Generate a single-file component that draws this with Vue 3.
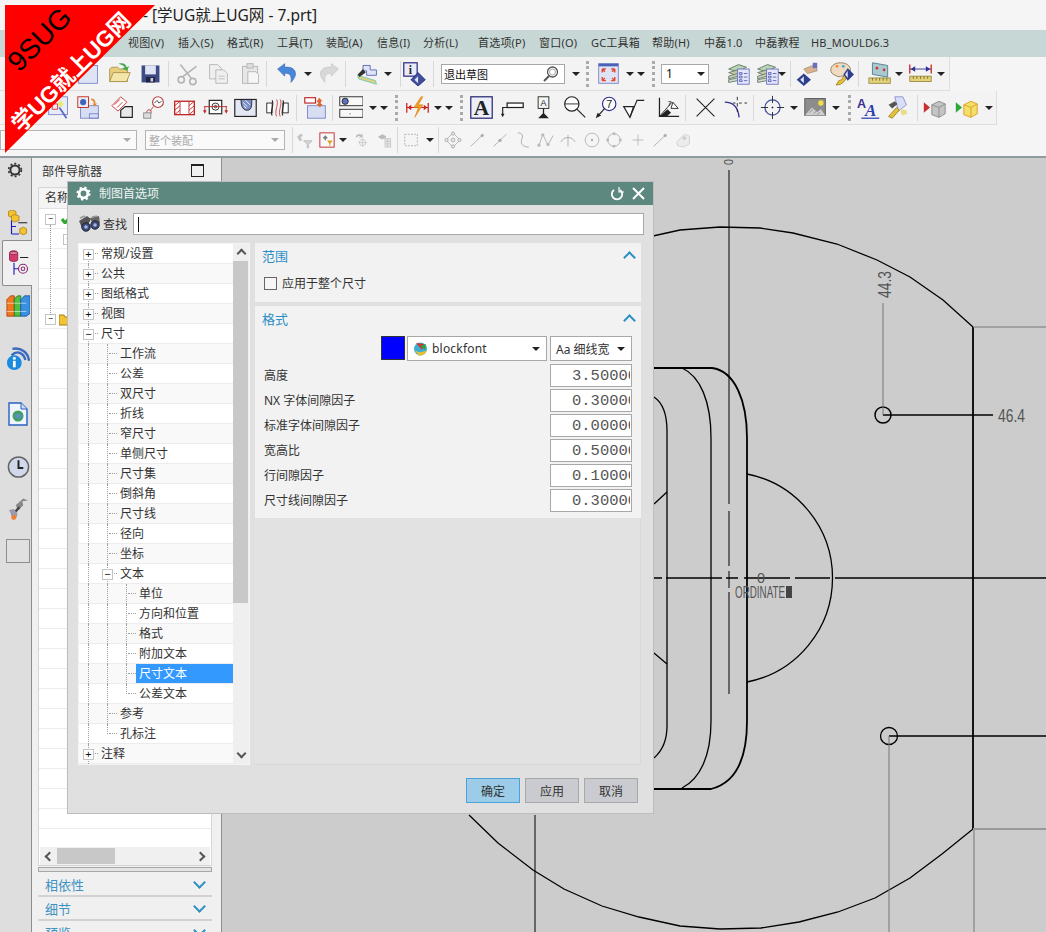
<script setup>
// petites icones de la barre d'outils, dessinees a la main (boite 28x28)
const icons = {
  newDoc: '<rect x="3" y="5" width="21" height="20" fill="#dfe4f5" stroke="#7a86c9"/>',
  open: '<path d="M3 23V9l2-2h7l2 2h9v14z" fill="#e8cf7e" stroke="#a8924e"/><path d="M3 23l4-10h19l-4 10z" fill="#f4e6a8" stroke="#a8924e"/><path d="M13 3c5-1 8 0 9 4l3-1-3 5-5-3 3-1c-1-2-4-3-7-4z" fill="#45a84c"/>',
  save: '<path d="M4 5h20v19H4z" fill="#3c4a86"/><rect x="8" y="5" width="12" height="10" fill="#dfe4f2"/><rect x="9" y="18" width="10" height="6" fill="#1d2440"/><rect x="14" y="19" width="3" height="4" fill="#ccd"/>',
  cut: '<g fill="none" stroke="#b4b4b4" stroke-width="1.8"><path d="M6 4l12 15M24 6L8 18"/><circle cx="7" cy="21" r="3.5"/><circle cx="20" cy="23" r="3.5"/></g>',
  copy: '<g fill="#efefef" stroke="#b4b4b4"><path d="M4 4h9l4 4v12H4z"/><path d="M11 10h9l4 4v11H11z"/></g><path d="M14 17h7M14 20h7" stroke="#bbb"/>',
  paste: '<rect x="5" y="6" width="17" height="19" fill="#e6e6e6" stroke="#b4b4b4"/><rect x="10" y="3" width="7" height="5" fill="#ddd" stroke="#b4b4b4"/><path d="M11 12h9l3 3v10H11z" fill="#f6f6f6" stroke="#b4b4b4"/>',
  undo: '<path d="M4 9l8-6v4c8-1 13 3 12 9-1 3-3 6-5 8 1-7-1-11-7-10v3z" fill="#4a86d8" stroke="#2d5ea8" stroke-width=".6"/>',
  redo: '<path d="M24 9l-8-6v4C8 6 3 10 4 16c1 3 3 6 5 8-1-7 1-11 7-10v3z" fill="#d8d8d8" stroke="#bcbcbc" stroke-width=".6"/>',
  sketch: '<path d="M9 5h8v5h7v6H13V11H9z" fill="#dfe5f7" stroke="#5a62b8"/><path d="M3 16l20 6 1 4-20-6z" fill="#e3d27a" stroke="#6bc5c0"/><path d="M3 15l6-6 3 4-7 5z" fill="#333"/>',
  info: '<rect x="2" y="2" width="15" height="15" fill="#e9ebf8" stroke="#2e2e86" stroke-width="1.4"/><text x="9.5" y="14" text-anchor="middle" font-size="13" font-weight="700" font-family="Liberation Serif" fill="#222">i</text><path d="M18 13l8 8-8 7-8-7z" fill="#3f4ea0" stroke="#1e2a70"/><path d="M18 17v8l-4-4z" fill="#dfe4f8"/>',
  fit: '<rect x="3" y="3" width="22" height="22" fill="#dfe3f6" stroke="#7d86c4"/><rect x="3" y="3" width="22" height="3" fill="#4a62b8"/><g stroke="#e04a2a" stroke-width="1.6" fill="none"><path d="M7 9h4M7 9v4M21 9h-4M21 9v4M7 22h4M7 22v-4M21 22h-4M21 22v-4M7 9l3 3M21 9l-3 3M7 22l3-3M21 22l-3-3"/></g>',
  stack: '<g fill="#b9d4b4" stroke="#5f7a62"><path d="M3 9l11-5 9 3-10 5z"/><path d="M3 13l10-3 4 2v3l-4 2z" fill="#c7c7a4"/><path d="M3 17l10-3v3l-10 3z" fill="#cfcfc0"/><path d="M3 21l10-2v3l-10 2z" fill="#d9d9d9"/></g><rect x="13" y="9" width="13" height="17" fill="#e4e7fa" stroke="#6a70c0"/><path d="M15 13h3v2h-3zM15 17h3v2h-3zM15 21h3v2h-3zM20 14h4M20 18h4M20 22h4" stroke="#5a60b8" fill="none"/>',
  hand: '<path d="M11 9l10-4 4 2 1 4-11 3z" fill="#d9b48e" stroke="#8d6d4d" stroke-width=".6"/><rect x="21" y="2" width="5" height="6" fill="#6670c0"/><path d="M11 14l8 7-8 7-8-7z" fill="#2f3f8e"/><path d="M11 17v8l-4-4z" fill="#dfe4f8"/>',
  palette: '<path d="M2 10c0-5 5-8 11-8s11 3 11 8-5 7-10 7c-1 1-4 1-7-1-3-1-5-3-5-6z" fill="#efdcc0" stroke="#8a7455"/><circle cx="9" cy="6" r="1.6" fill="#e84"/><circle cx="16" cy="6" r="1.6" fill="#4ac"/><path d="M8 27l3-5 3-1 3-5 3 2-3 5-4 3z" fill="#e6c23a" stroke="#a08420"/><path d="M21 8l7 7-7 7-5-7z" fill="#2f3f8e"/><path d="M21 11v8l-3-4z" fill="#dfe4f8"/>',
  plane: '<path d="M5 2l17 3v13L5 15z" fill="#a9c8cf" stroke="#4e7f8c"/><circle cx="10" cy="8" r="1.5" fill="#c33"/><circle cx="18" cy="10" r="1.5" fill="#c33"/><rect x="1" y="19" width="24" height="6" fill="#e3d27a" stroke="#9a8c44"/><path d="M5 19v3M9 19v3M13 19v3M17 19v3M21 19v3" stroke="#7a6c30"/>',
  dimRuler: '<rect x="2" y="17" width="24" height="6" fill="#e3d27a" stroke="#9a8c44"/><path d="M6 17v3M10 17v3M14 17v3M18 17v3M22 17v3" stroke="#7a6c30"/><path d="M2 9h24" stroke="#2f2f96"/><path d="M2 4v10M26 4v10" stroke="#c82020" stroke-width="1.4"/><path d="M3 9l5-3v6zM25 9l-5-3v6z" fill="#2f2f96"/>',
  magPage: '<rect x="3" y="2" width="21" height="20" fill="#e8ecf8" stroke="#7a86c9"/><path d="M7 10h6v6H7z" fill="none" stroke="#d33"/><path d="M15 14l8 12" stroke="#5a6ac4" stroke-width="2"/><path d="M16 6l4 4-4 4-3-4z" fill="#e8ec6a"/>',
  partPage: '<rect x="5" y="12" width="20" height="14" fill="#d7ddf3" stroke="#7a86c9"/><rect x="15" y="21" width="10" height="5" fill="none" stroke="#7a86c9"/><rect x="2" y="2" width="12" height="12" fill="#eee" stroke="#c82020"/><circle cx="8" cy="8" r="3.4" fill="#3f62b8"/><path d="M17 4c3 0 5 2 5 6l2-1-3 4-3-4 2 1c0-2-1-4-3-4z" fill="#e28a2e"/>',
  section: '<path d="M2 12L12 2l7 6-10 10z" fill="#fff" stroke="#c83030"/><path d="M5 11l6-6M8 14l6-6" stroke="#c83030"/><path d="M12 25V17l5-4h8v12z" fill="#e8e8e8" stroke="#222" stroke-width="1.3"/>',
  detail: '<circle cx="19" cy="8" r="6" fill="#fff" stroke="#b84040" stroke-width="1.3"/><path d="M15 9l3-3 2 3 3-2" stroke="#444" fill="none"/><path d="M14 13l-4 5" stroke="#b84040"/><circle cx="9" cy="19" r="2.5" fill="none" stroke="#b84040"/><rect x="3" y="20" width="8" height="6" fill="#ddd" stroke="#888"/>',
  hatchBar: '<rect x="3" y="7" width="22" height="15" fill="#fff" stroke="#c02828" stroke-width="1.5"/><path d="M9 7v15M19 7v15" stroke="#c02828"/><path d="M3 12l6-5M3 17l6-5M3 22l6-5M19 12l6-5M19 17l6-5M19 22l6-5" stroke="#c02828"/>',
  sectionView: '<rect x="7" y="6" width="14" height="15" fill="#fff" stroke="#222" stroke-width="1.3"/><circle cx="14" cy="13" r="4" fill="none" stroke="#222"/><circle cx="14" cy="13" r="1.4" fill="none" stroke="#222"/><path d="M1 13h26" stroke="#c02828"/><path d="M2 13v5M26 13v5" stroke="#c02828"/><path d="M0 17h4l-2 4zM24 17h4l-2 4z" fill="#c02828"/>',
  breakout: '<rect x="2" y="5" width="24" height="19" fill="#e4e8f4" stroke="#222" stroke-width="1.3"/><path d="M9 5c0 8 2 12 7 12s5-5 5-12z" fill="#7a8ec8" stroke="#222"/><path d="M11 8l5 5M14 6l5 5M12 12l3 3" stroke="#fff"/>',
  breakView: '<rect x="2" y="9" width="6" height="11" fill="#fff" stroke="#222"/><rect x="20" y="9" width="6" height="11" fill="#fff" stroke="#222"/><path d="M8 6c3 5-3 12 0 17M20 6c3 5-3 12 0 17" fill="none" stroke="#222" stroke-width="1.2"/><path d="M13 5c3 5-3 13 0 19M17 5c3 5-3 13 0 19" fill="none" stroke="#c04040"/>',
  viewMove: '<rect x="2" y="3" width="12" height="6" fill="#fff" stroke="#c02828" stroke-width="1.3"/><rect x="5" y="12" width="20" height="14" fill="#d7ddf3" stroke="#7a86c9"/><path d="M18 3l4 4h-2v3h2l-3 4-4-4h2V8h-2z" fill="#e0662e"/>',
  layerRow: '<rect x="2" y="2" width="26" height="10" fill="#f8f8f8" stroke="#222"/><rect x="2" y="16" width="26" height="9" fill="#f8f8f8" stroke="#222"/><circle cx="8" cy="7" r="3.5" fill="#6070c0" stroke="#222"/><path d="M13 21h1" stroke="#222"/>',
  bolt: '<path d="M2 14h24" stroke="#c82020" stroke-width="1.2"/><path d="M2 9v11M26 9v11" stroke="#c82020" stroke-width="1.4"/><path d="M3 14l4-3v6zM25 14l-4-3v6z" fill="#c82020"/><path d="M18 2l-8 12h5l-4 11 9-14h-5l5-9z" fill="#f0a020" stroke="#d87a10" stroke-width=".6"/>',
  letterA: '<rect x="2" y="2" width="24" height="24" fill="#eceef8" stroke="#2a2a72" stroke-width="1.4"/><text x="14" y="22" text-anchor="middle" font-size="24" font-weight="700" font-family="Liberation Serif" fill="#222">A</text>',
  weld: '<rect x="8" y="9" width="18" height="5" fill="#fff" stroke="#222" stroke-width="1.4"/><path d="M8 14H3v8" stroke="#222" fill="none" stroke-width="1.3"/><path d="M1 21h4l-2 4z" fill="#222"/>',
  datum: '<rect x="8" y="2" width="12" height="13" fill="#f4f4f4" stroke="#222"/><text x="14" y="12" text-anchor="middle" font-size="10" font-family="Liberation Sans" fill="#222">A</text><path d="M14 15v6" stroke="#222" stroke-width="1.4"/><path d="M8 26l6-6 6 6z" fill="#222"/>',
  mag: '<circle cx="11" cy="10" r="8" fill="#fff" stroke="#222" stroke-width="1.3"/><path d="M3 10h16" stroke="#222"/><path d="M17 16l9 9" stroke="#222" stroke-width="1.3"/>',
  balloon: '<circle cx="17" cy="10" r="7.5" fill="#fff" stroke="#2f2f96" stroke-width="1.3"/><text x="17" y="14" text-anchor="middle" font-size="12" font-family="Liberation Sans" fill="#222">7</text><path d="M12 15L4 24" stroke="#222" stroke-width="1.3"/><path d="M2 26l2-6 4 3z" fill="#222"/>',
  sqrt: '<path d="M3 13h11L10 25z" fill="#fff" stroke="#222" stroke-width="1.3"/><path d="M10 25L18 6h8" fill="none" stroke="#222" stroke-width="1.3"/>',
  angle: '<path d="M5 3v21h22" fill="none" stroke="#222" stroke-width="1.4"/><path d="M5 24l9-8 4 4-5 4z" fill="#222"/><path d="M5 24l14-16" stroke="#222"/><path d="M20 8l6 7h-8z" fill="#fff" stroke="#222"/><text x="14" y="12" font-size="8" font-family="Liberation Sans" fill="#222">7</text>',
  cross: '<path d="M4 4l20 20M24 4L4 24" stroke="#222" stroke-width="1.2"/>',
  filletCross: '<path d="M2 8c10 0 15 6 16 17" fill="none" stroke="#2f2f96" stroke-width="1.4"/><path d="M16 2v4M16 9v4M16 16v3M11 9h3M18 9h3M24 9h3" stroke="#222"/>',
  target: '<circle cx="14" cy="14" r="8.5" fill="none" stroke="#3f4ea0" stroke-width="1.4"/><path d="M14 1v8M14 19v8M1 14h8M19 14h8M13 14h2M14 13v2" stroke="#222"/>',
  image: '<rect x="2" y="4" width="23" height="19" fill="#8c8c8c" stroke="#555"/><circle cx="20" cy="9" r="3" fill="#f0e040"/><path d="M2 23l8-9 6 5 4-3 5 7z" fill="#cfcfcf"/><path d="M7 20l4-4M12 21l4-4M16 22l3-3" stroke="#8c8c8c"/>',
  textStyle: '<text x="1" y="14" font-size="14" font-weight="700" font-family="Liberation Sans" fill="#3a2f96">A</text><text x="10" y="24" font-size="19" font-weight="700" font-style="italic" font-family="Liberation Serif" fill="#2f3fb0">A</text><path d="M6 26h20" stroke="#2f3fb0" stroke-width="1.4"/>',
  wrenchDoc: '<path d="M11 2h9l4 9-9 7z" fill="#d9ddf5" stroke="#8a90d0"/><path d="M4 24l9-10 3 3-8 9z" fill="#e6c23a" stroke="#9a8420"/><path d="M4 11l7-4 3 3-6 5z" fill="#555"/><path d="M17 16l7 1 1 4-6 2z" fill="#eadc88"/>',
  cubeRed: '<path d="M2 8l7 6-7 6z" fill="#c83030"/><path d="M11 11l8-4 7 3v11l-7 4-8-3z" fill="#c4c4c4" stroke="#8a8a8a"/><path d="M11 11l8 3 7-4M19 14v11" stroke="#8a8a8a" fill="none"/>',
  cubeYellow: '<path d="M2 8l7 6-7 6z" fill="#2da83a"/><path d="M11 11l8-4 7 3v11l-7 4-8-3z" fill="#f2e06a" stroke="#e09a20"/><path d="M11 11l8 3 7-4M19 14v11" stroke="#e09a20" fill="none"/>',
  filterA: '<path d="M3 9l6-4 2 3-3 2 2 5-4 0z" fill="#c4c4c4"/><path d="M12 15h12l-5 5v5h-2v-5z" fill="#d4d4d4" stroke="#b4b4b4"/>',
  filterB: '<rect x="1.5" y="1.5" width="25" height="25" fill="#fafafa" stroke="#c02828" stroke-width="1.6"/><path d="M11 6v9M7 10h8" stroke="#444"/><circle cx="11" cy="10" r="2.5" fill="none" stroke="#444"/><path d="M14 15h10l-4 5v4h-2v-4z" fill="#e0a020"/>',
  filterC: '<path d="M4 9c2-5 7-5 9-3l2-2v6h-6l2-2c-2-1-4 0-5 2z" fill="#bdbdbd"/><circle cx="15" cy="18" r="5" fill="none" stroke="#bdbdbd"/><path d="M15 11v14M8 18h14" stroke="#bdbdbd"/>',
  filterD: '<path d="M3 9l7-4 6 3-2 4-6 1z" fill="#bbb"/><rect x="14" y="12" width="9" height="13" fill="#e4e4e4" stroke="#c0c0c0"/><path d="M14 16h9M14 20h9M18 12v13" stroke="#c0c0c0"/>',
  dashBox: '<rect x="3" y="4" width="22" height="20" fill="none" stroke="#999" stroke-width="1.3" stroke-dasharray="3 2.5"/>',
  snapPts: '<g fill="#e4e4e4" stroke="#aaa" stroke-width="1.3"><path d="M14 3l11 11-11 11L3 14z" fill="none"/><circle cx="14" cy="4" r="2.5"/><circle cx="14" cy="24" r="2.5"/><circle cx="4" cy="14" r="2.5"/><circle cx="24" cy="14" r="2.5"/><circle cx="14" cy="14" r="3"/></g>',
  line1: '<path d="M4 24L24 5" stroke="#aaa" stroke-width="1.3"/><circle cx="22" cy="7" r="2.4" fill="#aaa"/>',
  line2: '<path d="M4 24L24 5" stroke="#aaa" stroke-width="1.3"/><circle cx="14" cy="14.5" r="2.6" fill="#aaa"/>',
  squiggle: '<path d="M6 3c8 0 8 5 6 10s0 12 11 12" fill="none" stroke="#aaa" stroke-width="1.5"/>',
  spline: '<path d="M3 23L9 5l8 17 8-15" fill="none" stroke="#aaa" stroke-width="1.3"/><circle cx="9" cy="6" r="2.6" fill="#bbb"/><circle cx="17" cy="21" r="2.6" fill="#bbb"/><circle cx="3" cy="22" r="2.6" fill="#bbb"/>',
  arc3: '<path d="M3 17c4-9 18-9 22 0" fill="none" stroke="#aaa" stroke-width="1.4"/><path d="M14 6v18" stroke="#aaa" stroke-width="1.3"/>',
  circleDot: '<circle cx="14" cy="14" r="12" fill="none" stroke="#aaa" stroke-width="1.4"/><circle cx="14" cy="14" r="2" fill="#aaa"/>',
  circlePts: '<circle cx="14" cy="14" r="11" fill="none" stroke="#aaa" stroke-width="1.4"/><circle cx="14" cy="3" r="2.6" fill="#bbb"/><circle cx="14" cy="25" r="2.6" fill="#bbb"/><circle cx="3" cy="14" r="2.6" fill="#bbb"/><circle cx="25" cy="14" r="2.6" fill="#bbb"/>',
  plus: '<path d="M14 3v22M3 14h22" stroke="#aaa" stroke-width="1.4"/>',
  solidPt: '<path d="M4 18l12-13 8 3v12l-9 5-9-2z" fill="#ececec" stroke="#c4c4c4"/><circle cx="16" cy="11" r="3" fill="#ccc"/>',
}

// une ligne d'outils : [centre x, type, largeur]
const sizes = { arrow: 8, sep: 1, grip: 3 }
const place = (items, size) => {
  let right = 0
  return items.map(([x, type, w]) => {
    const width = w || sizes[type] || size
    const item = { type, width, ml: x - width / 2 - right }
    right = x + width / 2
    return item
  })
}

const row1 = place([
  [88, 'newDoc'], [119, 'open'], [150, 'save'], [168, 'sep'], [187, 'cut'], [218, 'copy'], [250, 'paste'],
  [266, 'sep'], [286, 'undo'], [308, 'arrow'], [329, 'redo'], [345, 'sep'], [367, 'sketch'], [388, 'arrow'],
  [400, 'sep'], [414, 'info'], [433, 'sep'], [503, 'search', 124], [576, 'arrow'], [587, 'grip'], [608, 'fit'],
  [630, 'arrow'], [641, 'arrow'], [653, 'grip'], [685, 'spin', 48], [738, 'stack'], [767, 'stack'], [782, 'arrow'],
  [790, 'sep'], [806, 'hand'], [841, 'palette'], [858, 'sep'], [880, 'plane'], [899, 'arrow'], [920, 'dimRuler'], [941, 'arrow'],
], 25)
const row2 = place([
  [58, 'magPage'], [88, 'partPage'], [122, 'section'], [153, 'detail'], [184, 'hatchBar'], [215, 'sectionView'],
  [245, 'breakout'], [277, 'breakView'], [296, 'sep'], [315, 'viewMove'], [332, 'sep'], [350, 'layerRow'],
  [373, 'arrow'], [384, 'arrow'], [396, 'grip'], [417, 'bolt'], [438, 'arrow'], [449, 'arrow'], [461, 'grip'],
  [481, 'letterA'], [512, 'weld'], [543, 'datum'], [574, 'mag'], [606, 'balloon'], [633, 'sqrt'], [667, 'angle'],
  [685, 'sep'], [705, 'cross'], [735, 'filletCross'], [753, 'sep'], [772, 'target'], [794, 'arrow'], [815, 'image'],
  [836, 'arrow'], [849, 'grip'], [868, 'textStyle'], [897, 'wrenchDoc'], [917, 'sep'], [934, 'cubeRed'], [966, 'cubeYellow'], [989, 'arrow'],
], 25)
const row3 = place([
  [68, 'combo', 137], [215, 'combo2', 140], [292, 'sep'], [305, 'filterA', 20], [327, 'filterB', 16], [343, 'arrow'],
  [362, 'filterC', 18], [385, 'filterD', 18], [397, 'sep'], [411, 'dashBox', 16], [430, 'arrow'], [438, 'sep'],
  [453, 'snapPts'], [477, 'line1'], [500, 'line2'], [523, 'squiggle'], [546, 'spline'], [568, 'arc3'],
  [592, 'circleDot', 16], [614, 'circlePts', 16], [638, 'plus', 14], [660, 'line1'], [683, 'solidPt'],
], 18)
const toolRows = [
  { cls: 'row-a', items: row1 },
  { cls: 'row-b', items: row2 },
  { cls: 'row-c', items: row3 },
]

const menuPos = [
  ['视图(V)', 128], ['插入(S)', 178], ['格式(R)', 227], ['工具(T)', 277], ['装配(A)', 326], ['信息(I)', 377],
  ['分析(L)', 423], ['首选项(P)', 478], ['窗口(O)', 539], ['GC工具箱', 591], ['帮助(H)', 652], ['中磊1.0', 704],
  ['中磊教程', 755], ['HB_MOULD6.3', 811], ['', 900],
]
const menus = menuPos.slice(0, -1).map((m, i) => ({ t: m[0], width: menuPos[i + 1][1] - m[1] }))

// arbre du dialogue : niveau, repli, fin de branche
const tree = [
  { t: '常规/设置', l: 0, e: '+' }, { t: '公共', l: 0, e: '+' }, { t: '图纸格式', l: 0, e: '+' }, { t: '视图', l: 0, e: '+' },
  { t: '尺寸', l: 0, e: '-' },
  { t: '工作流', l: 1 }, { t: '公差', l: 1 }, { t: '双尺寸', l: 1 }, { t: '折线', l: 1 }, { t: '窄尺寸', l: 1 },
  { t: '单侧尺寸', l: 1 }, { t: '尺寸集', l: 1 }, { t: '倒斜角', l: 1 }, { t: '尺寸线', l: 1 }, { t: '径向', l: 1 }, { t: '坐标', l: 1 },
  { t: '文本', l: 1, e: '-' },
  { t: '单位', l: 2 }, { t: '方向和位置', l: 2 }, { t: '格式', l: 2 }, { t: '附加文本', l: 2 },
  { t: '尺寸文本', l: 2, sel: true }, { t: '公差文本', l: 2, last: true },
  { t: '参考', l: 1, up: true }, { t: '孔标注', l: 1, last: true, up: true },
  { t: '注释', l: 0, e: '+' },
]

const fields = [
  ['高度', '3.50000'],
  ['NX 字体间隙因子', '0.30000'],
  ['标准字体间隙因子', '0.00000'],
  ['宽高比', '0.50000'],
  ['行间隙因子', '0.10000'],
  ['尺寸线间隙因子', '0.30000'],
]

const navRows = Array.from({ length: 32 }, (_, i) => i)
</script>

<template>
  <div class="app">
    <div class="titlebar">- [学UG就上UG网 - 7.prt]</div>
    <div class="menubar">
      <span class="menu-first">文件(F)</span>
      <span v-for="m in menus" :key="m.t" class="menu-item" :style="{ width: m.width + 'px' }">{{ m.t }}</span>
    </div>

    <div class="toolbars">
      <div v-for="r in toolRows" :key="r.cls" class="toolrow" :class="r.cls">
        <template v-for="(it, i) in r.items" :key="i">
          <span v-if="it.type === 'arrow'" class="tarrow" :style="{ marginLeft: it.ml + 'px' }"></span>
          <span v-else-if="it.type === 'sep'" class="tsep" :style="{ marginLeft: it.ml + 'px' }"></span>
          <span v-else-if="it.type === 'grip'" class="tgrip" :style="{ marginLeft: it.ml + 'px' }"></span>
          <div v-else-if="it.type === 'search'" class="tsearch" :style="{ marginLeft: it.ml + 'px', width: it.width + 'px' }">
            <span class="tsearch-text">退出草图</span>
            <svg width="18" height="18" viewBox="0 0 18 18"><circle cx="10.5" cy="7" r="5" fill="#fff" stroke="#555" stroke-width="1.3"/><circle cx="10.5" cy="7" r="3" fill="none" stroke="#aaa"/><path d="M7 11l-5 5" stroke="#555" stroke-width="2"/></svg>
          </div>
          <div v-else-if="it.type === 'spin'" class="tspin" :style="{ marginLeft: it.ml + 'px', width: it.width + 'px' }">
            <span>1</span><i class="tarrow"></i>
          </div>
          <div v-else-if="it.type === 'combo'" class="tcombo" :style="{ marginLeft: it.ml + 'px', width: it.width + 'px' }">
            <span></span><i class="tarrow grey"></i>
          </div>
          <div v-else-if="it.type === 'combo2'" class="tcombo" :style="{ marginLeft: it.ml + 'px', width: it.width + 'px' }">
            <span>整个装配</span><i class="tarrow grey"></i>
          </div>
          <svg v-else class="ticon" viewBox="0 0 28 28" :style="{ marginLeft: it.ml + 'px', width: it.width + 'px', height: it.width + 'px' }" v-html="icons[it.type]"></svg>
        </template>
      </div>
    </div>
    <div class="toolbars-line"></div>

    <div class="main">
      <aside class="rail">
        <svg class="rail-gear" width="16" height="16" viewBox="0 0 16 16"><circle cx="8" cy="8" r="4.6" fill="none" stroke="#333" stroke-width="2"/><circle cx="8" cy="8" r="6.4" fill="none" stroke="#333" stroke-width="1.6" stroke-dasharray="2 2.1"/></svg>
        <div class="rail-tab first">
          <svg width="21" height="27" viewBox="0 0 26 36"><path d="M5 0l6 2v6l-6 2-4-2V2z" fill="#f4c430" stroke="#a87c10"/><path d="M9 6l6 2v6l-6 2-4-2V8z" fill="#f4c430" stroke="#a87c10"/><path d="M5 14v18M5 22h6M5 32h10" stroke="#1a1ac0" stroke-width="1.5" fill="none"/><path d="M14 17h12" stroke="#222" stroke-width="1.4"/><path d="M16 25l5-2 4 2v6l-4 2-5-2z" fill="#f4c430" stroke="#a87c10"/></svg>
        </div>
        <div class="rail-tab active">
          <svg width="21" height="27" viewBox="0 0 26 36"><path d="M1 4c0-4 11-4 11 0v9c0 3-11 3-11 0z" fill="#d43a6a" stroke="#7a1a40"/><ellipse cx="6.5" cy="4" rx="5.5" ry="2" fill="#e88aa8" stroke="#7a1a40"/><path d="M15 10h11" stroke="#222" stroke-width="1.4"/><path d="M7 17v16M7 25h6" stroke="#1a1ac0" stroke-width="1.5"/><circle cx="19" cy="25" r="6" fill="none" stroke="#8a2a70" stroke-width="1.5"/><circle cx="19" cy="25" r="2.4" fill="none" stroke="#8a2a70" stroke-width="1.4"/></svg>
        </div>
        <svg class="ri ri-books" width="24" height="24" viewBox="0 0 26 24"><path d="M1 5l4-4h4v22H1z" fill="#f07820" stroke="#b04a10"/><path d="M9 4l4-3h3v22H9z" fill="#50c040" stroke="#2a7a20"/><path d="M16 5l4-4h6v19l-4 3h-6z" fill="#3a90e0" stroke="#1a60a0"/><path d="M1 9h8M1 18h8M9 9h7M9 18h7M16 9h6M16 18h6" stroke="#fff" stroke-opacity=".6"/></svg>
        <svg class="ri ri-rss" width="24" height="26" viewBox="0 0 26 26"><path d="M6 9c6-6 13-3 15 5" fill="none" stroke="#3a6ac0" stroke-width="2.6"/><path d="M7 2c9-2 17 4 18 13" fill="none" stroke="#3a6ac0" stroke-width="2.6"/><circle cx="9" cy="17" r="8" fill="#1a8ae0"/><rect x="7.5" y="15" width="3" height="7" fill="#fff"/><rect x="7.5" y="11" width="3" height="2.6" fill="#fff"/></svg>
        <svg class="ri ri-doc" width="20" height="24" viewBox="0 0 20 24"><path d="M1 1h12l6 6v16H1z" fill="#f0f4ff" stroke="#2a60c0" stroke-width="1.4"/><path d="M13 1v6h6" fill="#cfdcf8" stroke="#2a60c0"/><circle cx="10" cy="14" r="5.5" fill="#40a060"/><path d="M6 14c2-3 6-3 8 0-1 3-5 4-8 0z" fill="#5a90c0"/></svg>
        <svg class="ri ri-clock" width="23" height="24" viewBox="0 0 24 24"><circle cx="12" cy="12" r="10.5" fill="#d0d8ea" stroke="#666" stroke-width="1.6"/><path d="M12 5v8h5" fill="none" stroke="#222" stroke-width="2"/></svg>
        <svg class="ri ri-tools" width="21" height="24" viewBox="0 0 22 24"><path d="M8 8L16 1l5 2-6 1 1 4-5 5z" fill="#888"/><path d="M12 10l-8 9" stroke="#444" stroke-width="2.6"/><path d="M1 13l5-1 4 5-1 4-5-2z" fill="#9a9ab0"/><circle cx="6" cy="21" r="2.6" fill="#f08030"/></svg>
        <div class="rail-empty"></div>
      </aside>

      <section class="nav">
        <div class="nav-head">
          <span>部件导航器</span>
          <i class="nav-win"></i>
        </div>
        <div class="nav-list">
          <div class="nav-col">名称</div>
          <div class="nav-body">
            <div v-for="n in navRows" :key="n" class="nav-row"></div>
            <i class="nav-exp e1">−</i>
            <i class="nav-exp e2">−</i>
            <i class="nav-exp e3">−</i>
            <i class="nav-vline"></i>
            <svg class="nav-check" width="12" height="10" viewBox="0 0 12 10"><path d="M1 5l3 4 7-8" fill="none" stroke="#2aa82a" stroke-width="3"/></svg>
            <svg class="nav-folder" width="14" height="12" viewBox="0 0 14 12"><path d="M0 11V1h5l1 2h7v8z" fill="#f4c430" stroke="#a87c10"/></svg>
          </div>
          <div class="nav-scroll">
            <b class="chev left"></b>
            <i class="nav-thumb"></i>
            <b class="chev right"></b>
          </div>
        </div>
        <div class="nav-split"></div>
        <div class="acc"><span>相依性</span><b class="acc-down"></b></div>
        <div class="acc"><span>细节</span><b class="acc-down"></b></div>
        <div class="acc"><span>预览</span><b class="acc-down"></b></div>
      </section>

      <div class="canvas">
        <svg width="824" height="775" viewBox="222 157 824 775" class="drawing">
          <g fill="none" stroke="#000" stroke-width="1.3">
            <path d="M520 226L653 235 680 229 720 226 760 227 793 232 837 243 877 259 910 276 943 299 973 326" />
            <path d="M973 828L942 853 910 877 875 897 838 911 799 921 761 927 720 928 680 925 639 916 602 905 564 888 533 869 498 842 469 814" />
            <path d="M973 326V828" stroke-width="1.8" />
            <path d="M653 367H712C735 370 747 400 747 437V720C747 760 735 782 711 788H640" stroke-width="1.8" />
            <path d="M653 367H682C700 375 711 400 711 437V720C711 755 700 778 682 787" stroke-width="1.3" />
            <path d="M654 396C663 402 667 412 667 430V725C667 740 662 750 654 757" />
            <path d="M667 491L654 503M654 652L667 663" />
            <path d="M747 473A106 106 0 0 1 747 681" />
            <path d="M883 414H993" />
            <circle cx="883" cy="414" r="8" stroke-width="1.5" />
            <circle cx="889" cy="735" r="8.5" stroke-width="1.3" />
            <path d="M889 735H1046" />
            <path d="M835 577H1046" />
            <path d="M653 577H662M666 577H722M726 577H738M744 577H790M795 577H830" />
            <path d="M729 169V503M729 510V565M729 570V587M729 591V693" stroke-width="1" />
            <path d="M535 814V932" stroke-width="1" />
          </g>
          <g fill="none" stroke="#777" stroke-width="1">
            <path d="M883 302V414" />
            <path d="M973 326H1046" />
            <path d="M889 735V932" />
            <path d="M974 828V932" />
          </g>
          <path d="M973 828H1046" stroke="#999" stroke-width="2" />
          <g class="cad-text">
            <text x="757" y="582" font-size="15" textLength="8" lengthAdjust="spacingAndGlyphs">0</text>
            <text x="735" y="597" font-size="16" textLength="50" lengthAdjust="spacingAndGlyphs">ORDINATE</text>
            <rect x="786" y="585" width="6" height="12" fill="#444" />
            <text x="998" y="421" font-size="18" textLength="27" lengthAdjust="spacingAndGlyphs">46.4</text>
            <text transform="translate(891 297) rotate(-90)" font-size="18" textLength="27" lengthAdjust="spacingAndGlyphs">44.3</text>
            <text transform="translate(733 164) rotate(-90)" font-size="12" textLength="6" lengthAdjust="spacingAndGlyphs">0</text>
          </g>
        </svg>
      </div>
    </div>

    <!-- fenetre flottante au-dessus de la vue -->
    <div class="dialog">
      <div class="dlg-title">
        <svg class="dlg-gear" width="15" height="15" viewBox="0 0 16 16"><circle cx="8" cy="8" r="4.6" fill="none" stroke="#fff" stroke-width="3"/><circle cx="8" cy="8" r="6.6" fill="none" stroke="#fff" stroke-width="2" stroke-dasharray="2.4 2.8"/></svg>
        <span class="dlg-name">制图首选项</span>
        <svg width="14" height="14" viewBox="0 0 14 14"><path d="M4 3a5.2 5.2 0 1 0 6 0" fill="none" stroke="#fff" stroke-width="1.8"/><path d="M9 0v5h5" fill="none" stroke="#fff" stroke-width="1.2"/></svg>
        <svg class="dlg-close" width="13" height="13" viewBox="0 0 13 13"><path d="M1 1l11 11M12 1L1 12" stroke="#fff" stroke-width="2"/></svg>
      </div>
      <div class="dlg-search">
        <svg width="23" height="18" viewBox="0 0 23 18"><path d="M1 6l8-5 4 3-3 6-6 3z" fill="#555"/><path d="M12 3l9-2 1 7-6 4z" fill="#666"/><path d="M2 3l5-2M14 2l5-1" stroke="#999" stroke-width="1.4"/><circle cx="8" cy="12" r="4.2" fill="#3a4a80" stroke="#222"/><circle cx="17" cy="10" r="4.2" fill="#3a4a80" stroke="#222"/><circle cx="8" cy="12" r="1.8" fill="#a8b4e0"/><circle cx="17" cy="10" r="1.8" fill="#a8b4e0"/></svg>
        <span class="dlg-find">查找</span>
        <div class="dlg-input"><i></i></div>
      </div>

      <div class="dlg-body">
        <div class="tree">
          <div class="tree-list">
            <div
              v-for="(r, i) in tree"
              :key="i"
              class="tree-row"
              :class="['lvl' + r.l, { odd: i % 2 === 1 }]"
            >
              <i v-if="i < 25" class="guide g0" :class="{ start: i === 0 }"></i>
              <i v-else class="guide g0"></i>
              <i v-if="r.l >= 1" class="guide g1" :class="{ end: r.l === 1 && r.last }"></i>
              <i v-if="r.l === 2" class="guide g2" :class="{ end: r.last }"></i>
              <i class="hdots"></i>
              <i v-if="r.e" class="exp">{{ r.e === '+' ? '+' : '−' }}</i>
              <span class="tree-text" :class="{ sel: r.sel }">{{ r.t }}</span>
            </div>
          </div>
          <div class="tree-scroll">
            <b class="chev up"></b>
            <i class="tree-thumb"></i>
            <b class="chev down"></b>
          </div>
        </div>

        <div class="pane">
          <section class="sec sec-scope">
            <header class="sec-head"><span>范围</span><b class="acc-up"></b></header>
            <label class="check"><i></i>应用于整个尺寸</label>
          </section>
          <section class="sec sec-format">
            <header class="sec-head"><span>格式</span><b class="acc-up"></b></header>
            <div class="font-row">
              <i class="swatch"></i>
              <div class="sel-box font-sel">
                <svg width="15" height="15" viewBox="0 0 15 15"><circle cx="7.5" cy="8" r="6.5" fill="#3ab0d8"/><path d="M3 2l8 1-2 6z" fill="#d83030"/><path d="M1 8c3 4 8 4 13 1l-2 4-6 2z" fill="#e8c030"/><path d="M7 5l6-2-1 6z" fill="#30a040"/></svg>
                <span>blockfont</span><i class="tarrow"></i>
              </div>
              <div class="sel-box weight-sel"><span>Aa 细线宽</span><i class="tarrow"></i></div>
            </div>
            <div v-for="f in fields" :key="f[0]" class="field">
              <span class="field-label">{{ f[0] }}</span>
              <div class="num"><span>{{ f[1] }}</span></div>
            </div>
          </section>
          <div class="pane-rest"></div>
        </div>
      </div>

      <div class="dlg-foot">
        <button class="btn primary">确定</button>
        <button class="btn">应用</button>
        <button class="btn">取消</button>
      </div>
    </div>

    <svg class="banner" width="160" height="160" viewBox="0 0 160 160">
      <path d="M5 5H155L5 153z" fill="#fe0000" />
      <text x="39" y="49" transform="rotate(-45 39 39)" text-anchor="middle" class="banner-top">9SUG</text>
      <text x="71" y="80" transform="rotate(-45 71 72)" text-anchor="middle" class="banner-main">学UG就上UG网</text>
    </svg>
  </div>
</template>

<style>
html, body {
  margin: 0;
  background: #f5f5f5;
}
</style>

<style scoped>
.app {
  position: relative;
  width: 1046px;
  height: 932px;
  overflow: hidden;
  display: flex;
  flex-direction: column;
  background: #f5f5f5;
  font-family: "Noto Sans", "Noto Sans CJK SC", sans-serif;
  font-size: 12px;
  color: #333;
}
i, b { display: block; font-style: normal; }

.titlebar {
  height: 30px;
  padding-left: 143px;
  line-height: 30px;
  font-size: 15.5px;
  color: #222;
  background: #f5f5f5;
  white-space: nowrap;
}
.menubar {
  height: 27px;
  box-sizing: border-box;
  padding-bottom: 3px;
  display: flex;
  align-items: center;
  background: #c7d7d5;
  font-size: 11px;
  letter-spacing: .2px;
  color: #333;
  white-space: nowrap;
}
.menu-first { width: 128px; padding-left: 60px; box-sizing: border-box; flex: none; }
.menu-item { flex: none; }

.toolbars { display: flex; flex-direction: column; background: #f5f5f5; }
.toolrow {
  display: flex;
  align-items: center;
  background: #f3f3f3;
  box-sizing: border-box;
  border-bottom: 1px solid #dedede;
  border-right: 1px solid #dedede;
}
.row-a { height: 34px; width: 950px; }
.row-b { height: 34px; width: 997px; }
.row-c { height: 30px; width: 700px; border: none; background: none; }
.ticon { flex: none; }
.tarrow {
  width: 0;
  height: 0;
  flex: none;
  box-sizing: content-box;
  border-left: 4px solid transparent;
  border-right: 4px solid transparent;
  border-top: 4px solid #222;
}
.tarrow.grey { border-top-color: #aaa; }
.tsep { width: 1px; height: 26px; background: #d8d8d8; flex: none; }
.tgrip {
  width: 3px;
  height: 26px;
  flex: none;
  box-sizing: border-box;
  border-left: 3px dotted #aaa;
}
.tsearch {
  height: 20px;
  flex: none;
  display: flex;
  align-items: center;
  justify-content: space-between;
  box-sizing: border-box;
  padding: 0 4px 0 2px;
  border: 1px solid #a8a8a8;
  background: #fff;
  color: #111;
}
.tsearch-text { font-size: 11px; }
.tspin {
  height: 20px;
  flex: none;
  display: flex;
  align-items: center;
  justify-content: space-between;
  box-sizing: border-box;
  padding: 0 3px 0 4px;
  border: 1px solid #a8a8a8;
  background: #fff;
  color: #111;
}
.tcombo {
  height: 20px;
  flex: none;
  display: flex;
  align-items: center;
  justify-content: space-between;
  box-sizing: border-box;
  padding: 0 5px 0 3px;
  border: 1px solid #b4b4b4;
  background: #fafafa;
  color: #aaa;
  font-size: 11px;
}
.toolbars-line { height: 2px; margin-top: 1px; background: #8f9b9e; }

.main { flex: 1; display: flex; min-height: 0; }
.rail {
  width: 32px;
  flex: none;
  box-sizing: border-box;
  border-right: 1px solid #8d8d8d;
  background: #dedede;
  display: flex;
  flex-direction: column;
  align-items: center;
}
.rail-gear { margin: 4px 2px 0 0; flex: none; }
.rail-tab {
  align-self: stretch;
  box-sizing: border-box;
  flex: none;
  display: flex;
  align-items: center;
  justify-content: center;
  padding-left: 4px;
}
.rail-tab.first { height: 44px; margin-top: 18px; padding-top: 10px; }
.rail-tab.active {
  height: 46px;
  margin: 0 -1px 0 2px;
  padding-left: 2px;
  background: #f0f0f0;
  border: 1px solid #8d8d8d;
  border-right: none;
  border-radius: 2px 0 0 2px;
}
.ri { flex: none; margin-left: 5px; }
.ri-books { margin-top: 8px; }
.ri-rss { margin-top: 28px; }
.ri-doc { margin-top: 30px; }
.ri-clock { margin-top: 29px; }
.ri-tools { margin-top: 18px; }
.rail-empty {
  width: 22px;
  height: 22px;
  margin: 18px 0 0 5px;
  border: 1px solid #8d8d8d;
  background: #e0e0e0;
  flex: none;
}

.nav {
  width: 190px;
  flex: none;
  box-sizing: border-box;
  padding: 0 9px 0 6px;
  border-right: 1px solid #8d8d8d;
  background: #f0f0f0;
  display: flex;
  flex-direction: column;
  overflow: hidden;
}
.nav-head {
  height: 29px;
  flex: none;
  box-sizing: border-box;
  padding: 0 6px 4px 4px;
  display: flex;
  align-items: center;
  justify-content: space-between;
}
.nav-win {
  width: 11px;
  height: 10px;
  margin-right: 2px;
  border: 1px solid #222;
  border-top-width: 2px;
}
.nav-list {
  height: 677px;
  flex: none;
  border: 1px solid #d6d6d6;
  background: #fff;
  display: flex;
  flex-direction: column;
}
.nav-col {
  height: 20px;
  flex: none;
  padding-left: 6px;
  line-height: 20px;
  background: #f4f4f4;
  border-bottom: 1px solid #e2e2e2;
}
.nav-body { position: relative; flex: 1; overflow: hidden; }
.nav-row { height: 19px; border-bottom: 1px solid #ececec; }
.nav-exp {
  position: absolute;
  left: 6px;
  width: 9px;
  height: 9px;
  border: 1px solid #c4c4c4;
  background: #fff;
  color: #222;
  font-size: 9px;
  line-height: 8px;
  text-align: center;
}
.e1 { top: 5px; }
.e2 { top: 25px; left: 24px; }
.e3 { top: 105px; }
.nav-vline {
  position: absolute;
  left: 11px;
  top: 16px;
  height: 90px;
  border-left: 1px dotted #999;
}
.nav-check { position: absolute; left: 22px; top: 5px; }
.nav-folder { position: absolute; left: 20px; top: 105px; }
.nav-scroll {
  height: 18px;
  flex: none;
  margin: 0 1px;
  background: #f0f0f0;
  position: relative;
  display: flex;
  align-items: center;
  justify-content: space-between;
  padding: 0 6px;
}
.nav-thumb {
  position: absolute;
  left: 17px;
  top: 1px;
  width: 58px;
  height: 16px;
  background: #c8c8c8;
}
.nav-split {
  flex: none;
  margin: 1px 0 0;
  border: 1px solid #a8a8a8;
  background: #e4e4e4;
  box-sizing: content-box;
  height: 3px;
}
.acc {
  height: 22px;
  flex: none;
  padding: 0 6px 0 7px;
  display: flex;
  align-items: center;
  justify-content: space-between;
  border-bottom: 2px solid #d2d2d2;
  color: #3f92c4;
  font-size: 13px;
}
.nav-split + .acc { margin-top: 1px; }
.acc:last-child { border: none; }

.chev {
  width: 5px;
  height: 5px;
  flex: none;
  border-left: 2px solid #555;
  border-top: 2px solid #555;
}
.chev.left { transform: rotate(-45deg); }
.chev.right { transform: rotate(135deg); }
.chev.up { transform: rotate(45deg); }
.chev.down { transform: rotate(225deg); }
.acc-down, .acc-up {
  width: 7px;
  height: 7px;
  margin-right: 2px;
  border-left: 2px solid #2b8fc7;
  border-top: 2px solid #2b8fc7;
}
.acc-down { transform: rotate(225deg); margin-top: -4px; }
.acc-up { transform: rotate(45deg); margin-top: 4px; }

.canvas { flex: 1; background: #cccccc; overflow: hidden; }
.drawing { display: block; }
.cad-text text {
  font-family: "Liberation Sans", sans-serif;
  fill: #555;
}

.dialog {
  position: absolute;
  left: 67px;
  top: 181px;
  width: 587px;
  height: 633px;
  box-sizing: border-box;
  border: 1px solid #bdbdbd;
  background: #e0e0e0;
  display: flex;
  flex-direction: column;
}
.dlg-title {
  height: 23px;
  flex: none;
  box-sizing: border-box;
  padding: 0 8px;
  display: flex;
  align-items: center;
  gap: 8px;
  background: #5c8880;
  color: #eef4f2;
}
.dlg-name { flex: 1; font-size: 12px; padding-bottom: 1px; }
.dlg-close { margin-left: 0; }
.dlg-search {
  height: 22px;
  flex: none;
  margin: 8px 9px 0 10px;
  display: flex;
  align-items: center;
}
.dlg-find { margin: 0 6px 0 2px; font-size: 12px; }
.dlg-input {
  flex: 1;
  height: 22px;
  box-sizing: border-box;
  padding-left: 4px;
  display: flex;
  align-items: center;
  border: 1px solid #a8a8a8;
  background: #fff;
}
.dlg-input i { width: 1px; height: 15px; background: #111; }
.dlg-body {
  height: 522px;
  flex: none;
  margin: 8px 0 0 10px;
  display: flex;
  gap: 5px;
}
.tree {
  width: 172px;
  flex: none;
  display: flex;
  border: 1px solid #f4f4f4;
  box-sizing: border-box;
  background: #fff;
}
.tree-list { flex: 1; overflow: hidden; }
.tree-row {
  position: relative;
  height: 20px;
  box-sizing: border-box;
  border-bottom: 1px solid #ececec;
  background: #fff;
  line-height: 19px;
  white-space: nowrap;
}
.tree-row.odd { background: #f9f9f9; }
.guide {
  position: absolute;
  top: 0;
  bottom: -1px;
  border-left: 1px dotted #a0a0a0;
}
.guide.start { top: 10px; }
.guide.end { bottom: 9px; }
.g0 { left: 9px; }
.g1 { left: 28px; }
.g2 { left: 47px; }
.hdots {
  position: absolute;
  top: 9px;
  width: 8px;
  border-top: 1px dotted #a0a0a0;
}
.lvl0 .hdots { left: 11px; }
.lvl1 .hdots { left: 30px; }
.lvl2 .hdots { left: 49px; }
.exp {
  position: absolute;
  top: 5px;
  width: 9px;
  height: 9px;
  border: 1px solid #c4c4c4;
  background: #fff;
  color: #111;
  font-size: 11px;
  line-height: 8px;
  text-align: center;
}
.lvl0 .exp { left: 4px; }
.lvl1 .exp { left: 23px; }
.tree-text { position: absolute; top: 0; font-size: 12px; }
.lvl0 .tree-text { left: 22px; }
.lvl1 .tree-text { left: 41px; }
.lvl2 .tree-text { left: 60px; }
.tree-text.sel {
  left: 57px;
  right: 0;
  padding-left: 3px;
  height: 19px;
  background: #3399ff;
  color: #fff;
}
.tree-scroll {
  position: relative;
  width: 16px;
  flex: none;
  background: #efefef;
  display: flex;
  flex-direction: column;
  align-items: center;
}
.chev.up { margin-top: 6px; }
.chev.down { position: absolute; bottom: 7px; }
.tree-thumb {
  position: absolute;
  left: 0;
  top: 17px;
  width: 15px;
  height: 342px;
  background: #c8c8c8;
}

.pane { width: 386px; flex: none; display: flex; flex-direction: column; gap: 4px; }
.sec { background: #f2f2f2; flex: none; padding: 0 9px 0 7px; box-sizing: border-box; }
.sec-scope { height: 59px; }
.sec-format { height: 212px; margin-bottom: -3px; }
.sec-head {
  height: 25px;
  margin-right: -3px;
  display: flex;
  align-items: center;
  justify-content: space-between;
  color: #2b8fc7;
  font-size: 13px;
}
.sec-head .acc-up { margin-right: 1px; }
.check {
  display: flex;
  align-items: center;
  gap: 5px;
  margin: 6px 0 0 2px;
  font-size: 12px;
}
.check i {
  width: 11px;
  height: 11px;
  border: 1px solid #666;
  background: #f6f6f6;
}
.font-row {
  display: flex;
  justify-content: flex-end;
  align-items: flex-start;
  gap: 3px;
  margin: 5px 0 2px;
}
.swatch {
  width: 22px;
  height: 22px;
  margin-right: -1px;
  border: 1px solid #333;
  background: #0000ff;
}
.sel-box {
  height: 25px;
  box-sizing: border-box;
  display: flex;
  align-items: center;
  border: 1px solid #a8a8a8;
  background: #fff;
  font-size: 12px;
  padding: 0 6px 0 5px;
}
.font-sel { width: 140px; gap: 4px; }
.font-sel span { flex: 1; letter-spacing: .2px; }
.weight-sel { width: 82px; justify-content: space-between; }
.field {
  height: 25px;
  display: flex;
  align-items: center;
  justify-content: space-between;
  font-size: 12px;
  padding-left: 2px;
}
.field-label { margin-top: -2px; }
.num {
  width: 82px;
  height: 23px;
  box-sizing: border-box;
  padding: 0 1px 0 21px;
  border: 1px solid #a8a8a8;
  background: #fff;
  overflow: hidden;
  line-height: 22px;
  font-family: "Liberation Mono", monospace;
  font-size: 15.5px;
  color: #555;
  white-space: nowrap;
}
.num span { display: block; overflow: hidden; }
.pane-rest {
  flex: 1;
  background: #e2e2e2;
  border-right: 1px solid #d8d8d8;
  border-bottom: 1px solid #d8d8d8;
}

.dlg-foot {
  flex: 1;
  display: flex;
  justify-content: flex-end;
  align-items: flex-start;
  gap: 5px;
  padding: 13px 15px 0 0;
}
.btn {
  width: 54px;
  height: 25px;
  padding: 0;
  border: 1px solid #a8a8a8;
  background: #c9cbd1;
  color: #333;
  font-family: inherit;
  font-size: 12px;
}
.btn.primary { background: #9ccce8; border-color: #4aa3d8; }

.banner { position: absolute; left: 0; top: 0; }
.banner-top {
  font-family: "Liberation Sans", sans-serif;
  font-size: 28px;
  fill: #000;
}
.banner-main {
  font-family: "Liberation Sans", "Noto Sans CJK SC", sans-serif;
  font-size: 22.5px;
  font-weight: 700;
  fill: #fff;
}
</style>
